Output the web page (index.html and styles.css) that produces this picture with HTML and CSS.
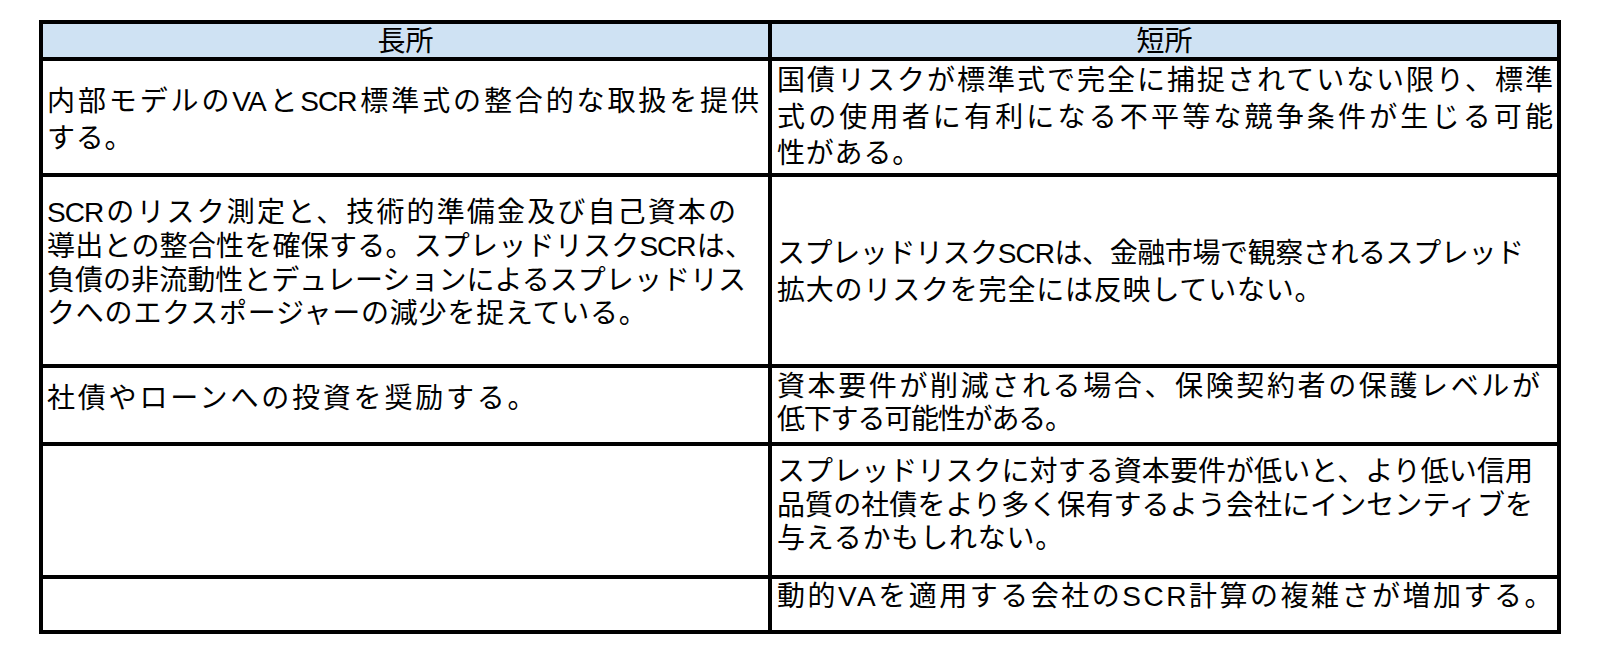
FILE: index.html
```html
<!DOCTYPE html>
<html lang="ja">
<head>
<meta charset="utf-8">
<title>長所と短所</title>
<link rel="stylesheet" href="styles.css">
</head>
<body>
<div class="sheet">
  <div class="cell head">長所</div>
  <div class="cell head">短所</div>

  <div class="cell pros r1">
    <span class="ln j">内部モデルのVAとSCR標準式の整合的な取扱を提供</span>
    <span class="ln">する。</span>
  </div>
  <div class="cell cons r1">
    <span class="ln j">国債リスクが標準式で完全に捕捉されていない限り、標準</span>
    <span class="ln j">式の使用者に有利になる不平等な競争条件が生じる可能</span>
    <span class="ln">性がある。</span>
  </div>

  <div class="cell pros r2">
    <span class="ln j">SCRのリスク測定と、技術的準備金及び自己資本の</span>
    <span class="ln j">導出との整合性を確保する。スプレッドリスクSCRは、</span>
    <span class="ln j">負債の非流動性とデュレーションによるスプレッドリス</span>
    <span class="ln">クへのエクスポージャーの減少を捉えている。</span>
  </div>
  <div class="cell cons r2">
    <span class="ln j">スプレッドリスクSCRは、金融市場で観察されるスプレッド</span>
    <span class="ln">拡大のリスクを完全には反映していない。</span>
  </div>

  <div class="cell pros r3">
    <span class="ln">社債やローンへの投資を奨励する。</span>
  </div>
  <div class="cell cons r3">
    <span class="ln j">資本要件が削減される場合、保険契約者の保護レベルが</span>
    <span class="ln">低下する可能性がある。</span>
  </div>

  <div class="cell pros r4"></div>
  <div class="cell cons r4">
    <span class="ln j">スプレッドリスクに対する資本要件が低いと、より低い信用</span>
    <span class="ln j">品質の社債をより多く保有するよう会社にインセンティブを</span>
    <span class="ln">与えるかもしれない。</span>
  </div>

  <div class="cell pros r5"></div>
  <div class="cell cons r5">
    <span class="ln">動的VAを適用する会社のSCR計算の複雑さが増加する。</span>
  </div>
</div>
</body>
</html>
```

FILE: styles.css
```css
html, body {
  background: #ffffff;
}

body {
  margin: 8px;
  font-family: "Liberation Sans", "Noto Sans CJK JP", sans-serif;
  color: #000000;
}

.sheet {
  display: grid;
  grid-template-columns: 725px 785px;
  grid-template-rows: 33px 112px 187px 74px 129px 51px;
  gap: 4px;
  padding: 4px;
  background: #000000;
  width: max-content;
  margin: 12px 0 0 31px;
}

.cell {
  background: #ffffff;
  display: flex;
  flex-direction: column;
  justify-content: flex-start;
  padding: 0 6px 0 5px;
  font-size: 28px;
  line-height: 34px;
  letter-spacing: 0.8px;
}

.pros {
  padding-left: 4px;
}

.head {
  background: #cfe2f3;
  align-items: center;
  line-height: 30px;
  padding: 3px 0 0 0;
  letter-spacing: 0;
}

.ln {
  display: block;
  white-space: nowrap;
}

.ln.j {
  white-space: normal;
  letter-spacing: -1px;
  text-align: justify;
  text-align-last: justify;
}

/* per-row line spacing, vertical placement and right edge of justified lines */
.pros.r1 { line-height: 37px; padding-top: 22px; padding-right: 10px; }
.cons.r1 { line-height: 36.5px; padding-top: 2px; padding-right: 5px; }

.pros.r2 { line-height: 33.8px; padding-top: 19px; padding-right: 16px; }
.pros.r2 .ln:nth-child(1) { margin-right: 17px; }
.pros.r2 .ln:nth-child(3) { margin-right: 7px; }
.cons.r2 { line-height: 37px; padding-top: 58px; padding-right: 34px; }

.pros.r3 { padding-top: 14px; letter-spacing: 2.8px; }
.cons.r3 { line-height: 32.5px; padding-top: 3px; padding-right: 18px; }
.cons.r3 .ln:last-child { letter-spacing: -1.2px; }

.cons.r4 { line-height: 33.5px; padding-top: 9px; padding-right: 25px; }

.cons.r5 { padding-top: 1px; letter-spacing: 2.5px; }
```
